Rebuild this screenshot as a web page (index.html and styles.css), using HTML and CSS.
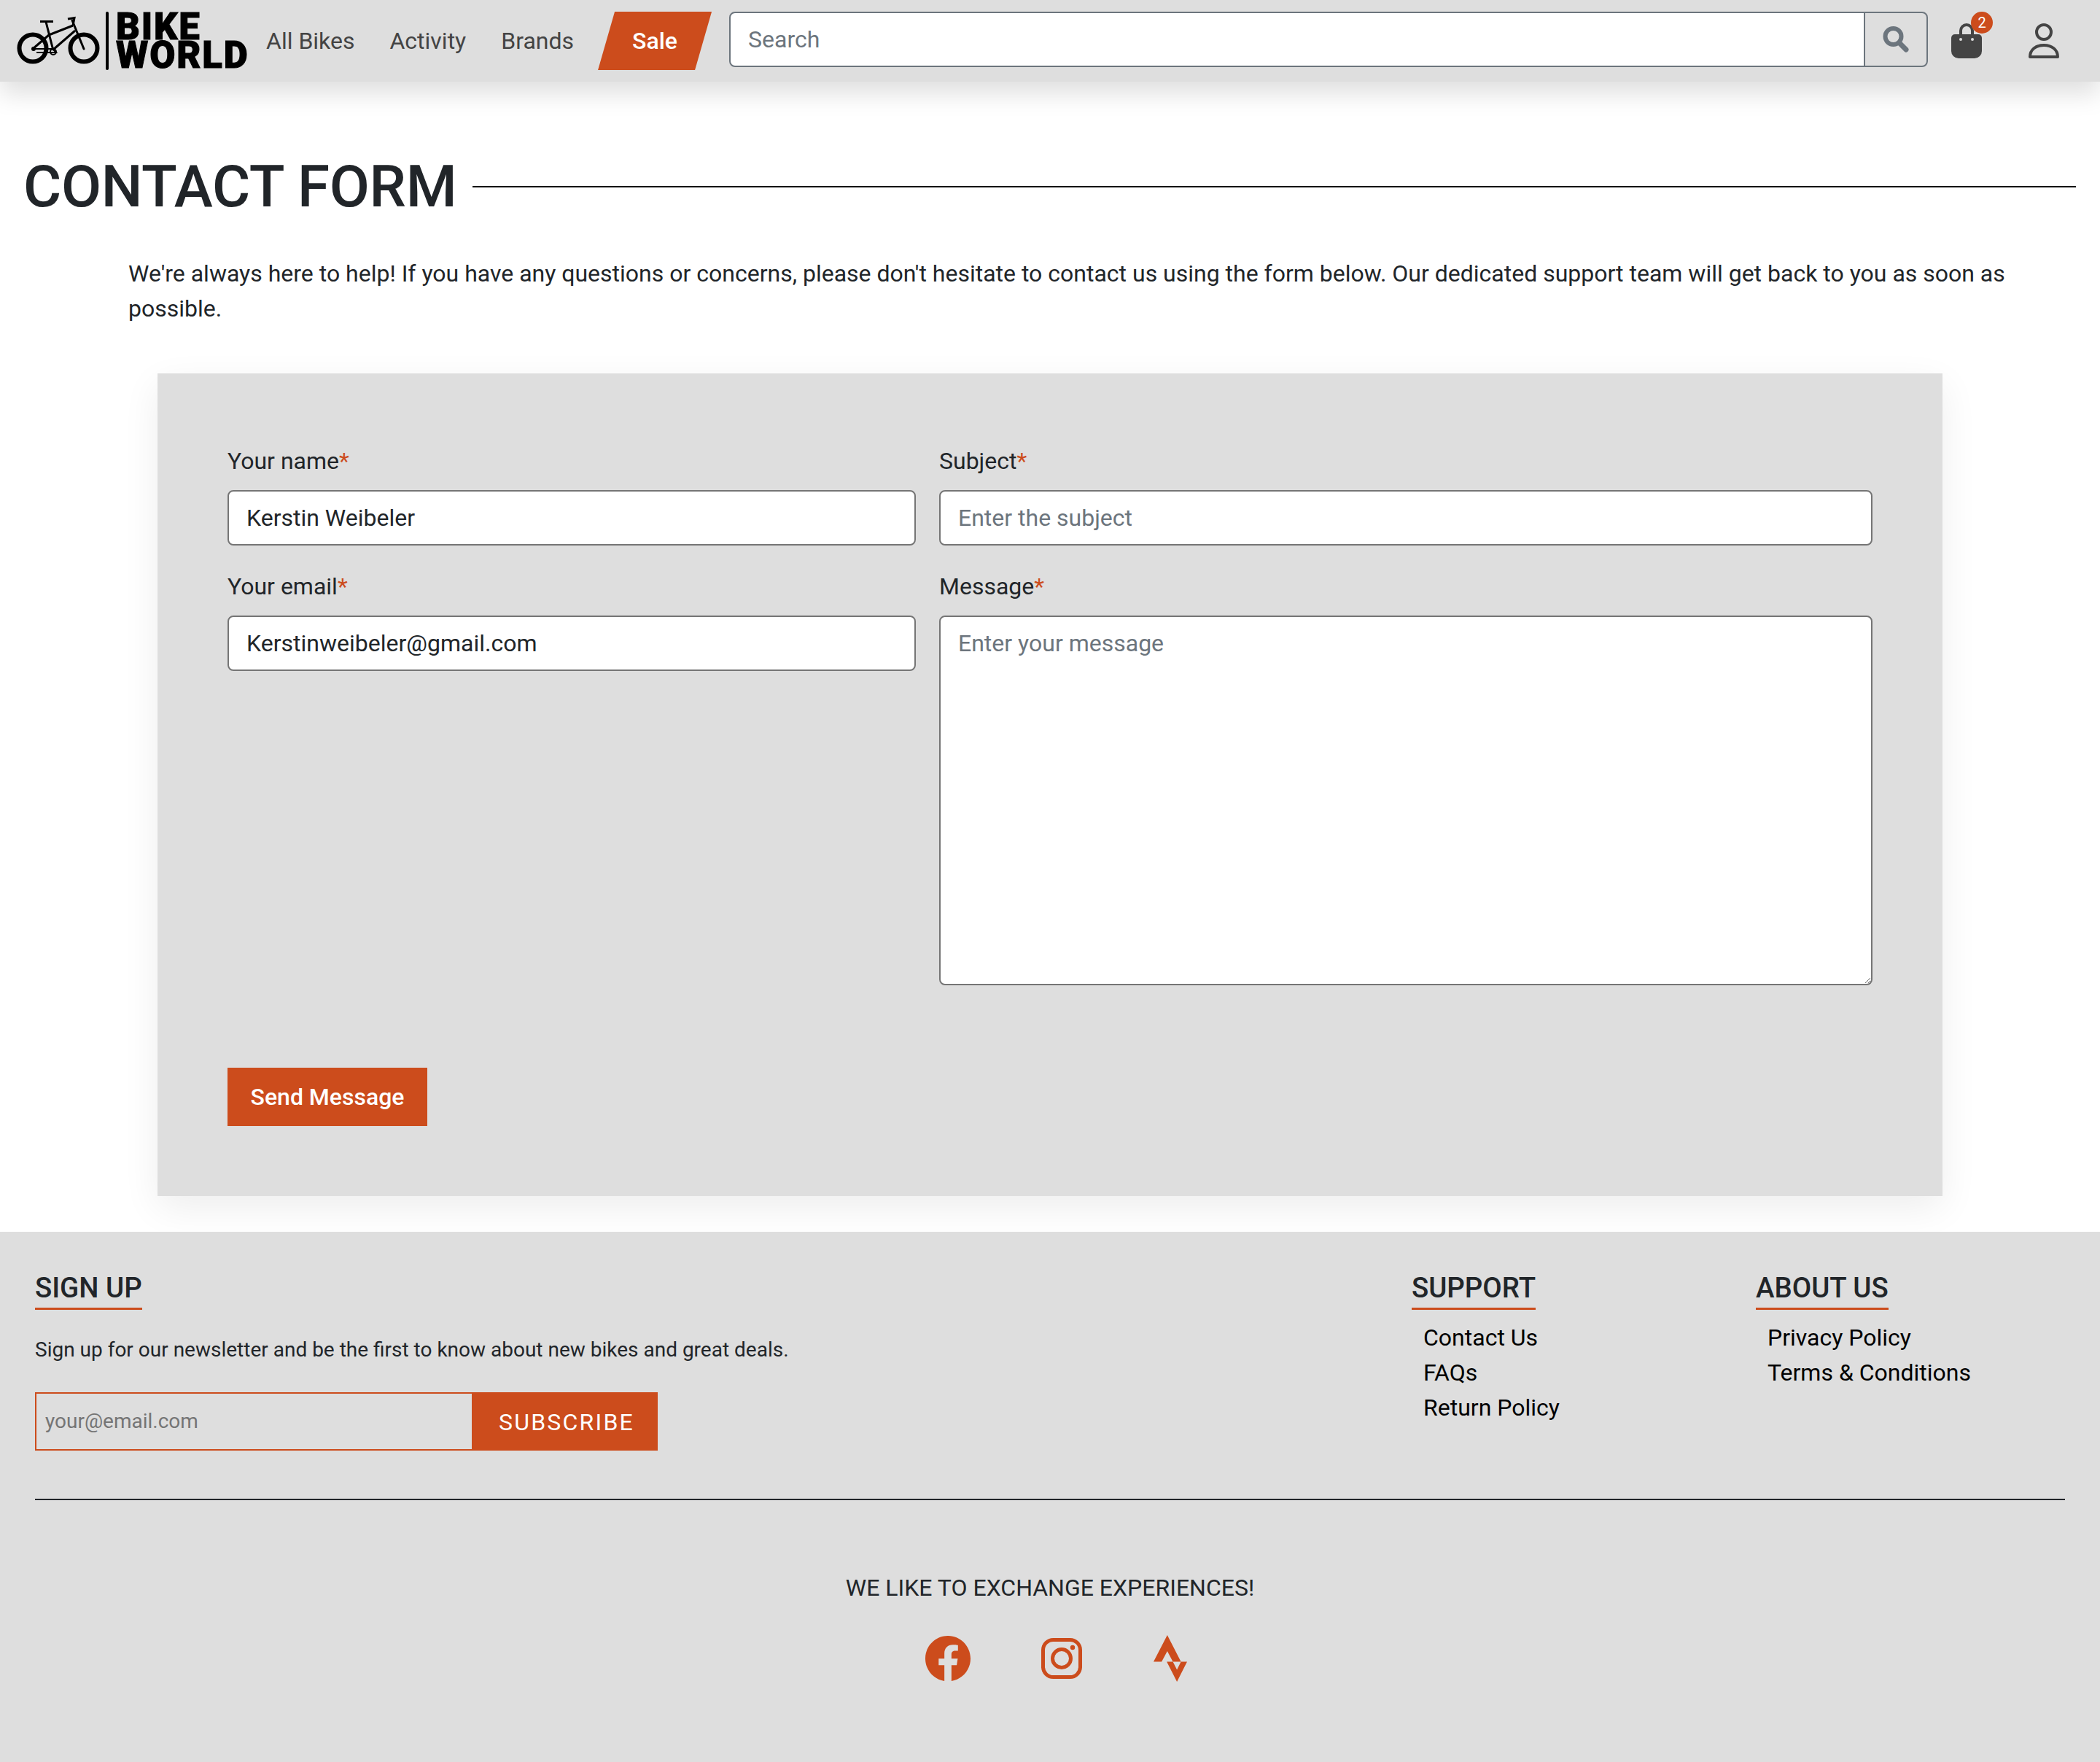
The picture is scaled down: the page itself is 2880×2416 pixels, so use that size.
FILE: index.html
```html
<!DOCTYPE html>
<html lang="en">
<head>
<meta charset="utf-8">
<title>Contact Form - Bike World</title>
<link rel="stylesheet" href="styles.css">
</head>
<body>
<header class="topbar">
  <a class="logo" href="#">
    <svg class="logo-bike" viewBox="22 16 128 80" width="128" height="80" aria-hidden="true">
      <g fill="none" stroke="#000">
        <circle cx="45" cy="66" r="18.5" stroke-width="6"/>
        <circle cx="115" cy="66" r="18.5" stroke-width="6"/>
        <path stroke-width="3" d="M63 30 73 69M67 48 100 35M73 68 103 42M45 67 67 48"/>
        <path stroke-width="2" d="M45 67H72L77 72H50"/>
        <path stroke-width="3" stroke-linecap="round" d="M99 28 115 67"/>
        <path stroke-width="3" d="M55 29.500H73M93 26 102 24.500 100 35"/>
        <circle cx="46" cy="67" r="3" fill="#000" stroke="none"/>
        <circle cx="73" cy="71" r="4" stroke-width="2"/>
        <path stroke-width="4" stroke-linecap="round" d="M147 18V94"/>
      </g>
    </svg>
    <span class="logo-text"><span>BIKE</span><span>WORLD</span></span>
  </a>
  <nav class="mainnav">
    <a href="#">All Bikes</a>
    <a href="#">Activity</a>
    <a href="#">Brands</a>
  </nav>
  <a class="sale" href="#">Sale</a>
  <form class="search">
    <input type="text" placeholder="Search">
    <button type="button" aria-label="Search">
      <svg viewBox="0 0 36 38" width="36" height="38" fill="none" stroke="#6c757d">
        <circle cx="14.500" cy="15" r="11" stroke-width="6"/>
        <path d="M23 24 32 33" stroke-width="7" stroke-linecap="round"/>
      </svg>
    </button>
  </form>
  <a class="cart" href="#" aria-label="Cart">
    <svg viewBox="0 0 42 48" width="42" height="48">
      <path d="M13 17V10a8 8 0 0 1 16 0V17" fill="none" stroke="#444" stroke-width="4"/>
      <path d="M5 15H37a5 5 0 0 1 5 5V38a10 10 0 0 1-10 10H10A10 10 0 0 1 0 38V20a5 5 0 0 1 5-5Z" fill="#444"/>
      <circle cx="13" cy="22" r="2" fill="#ddd"/>
      <circle cx="29" cy="22" r="2" fill="#ddd"/>
    </svg>
    <span class="badge">2</span>
  </a>
  <a class="account" href="#" aria-label="Account">
    <svg viewBox="0 0 42 48" width="42" height="48" fill="none" stroke="#444" stroke-width="4">
      <circle cx="21" cy="12" r="10"/>
      <path d="M2 46C2 36 10 30 21 30S40 36 40 46Z" stroke-linejoin="round"/>
    </svg>
  </a>
</header>

<main class="page">
  <h1 class="page-title">CONTACT FORM</h1>
  <p class="intro">We're always here to help! If you have any questions or concerns, please don't hesitate to contact us using the form below. Our dedicated support team will get back to you as soon as possible.</p>
  <form class="card">
    <div class="fields">
      <div class="col-left">
        <div class="group">
          <label>Your name<span class="req">*</span></label>
          <input class="control" type="text" value="Kerstin Weibeler">
        </div>
        <div class="group">
          <label>Your email<span class="req">*</span></label>
          <input class="control" type="email" value="Kerstinweibeler@gmail.com">
        </div>
      </div>
      <div class="col-right">
        <div class="group">
          <label>Subject<span class="req">*</span></label>
          <input class="control" type="text" placeholder="Enter the subject">
        </div>
        <div class="group">
          <label>Message<span class="req">*</span></label>
          <textarea class="control message" placeholder="Enter your message"></textarea>
        </div>
      </div>
    </div>
    <button class="send" type="button">Send Message</button>
  </form>
</main>

<footer class="footer">
  <div class="footer-top">
    <section class="signup">
      <h2 class="foot-title">SIGN UP</h2>
      <p class="signup-text">Sign up for our newsletter and be the first to know about new bikes and great deals.</p>
      <div class="subscribe">
        <input type="email" placeholder="your@email.com">
        <button type="button">SUBSCRIBE</button>
      </div>
    </section>
    <section class="links links-support">
      <h2 class="foot-title">SUPPORT</h2>
      <ul>
        <li><a href="#">Contact Us</a></li>
        <li><a href="#">FAQs</a></li>
        <li><a href="#">Return Policy</a></li>
      </ul>
    </section>
    <section class="links links-about">
      <h2 class="foot-title">ABOUT US</h2>
      <ul>
        <li><a href="#">Privacy Policy</a></li>
        <li><a href="#">Terms &amp; Conditions</a></li>
      </ul>
    </section>
  </div>
  <div class="social">
    <p>WE LIKE TO EXCHANGE EXPERIENCES!</p>
    <div class="social-icons">
      <a href="#" aria-label="Facebook"><svg viewBox="0 0 16 16" width="62" height="62" fill="#cc4c1c"><path d="M16 8.049c0-4.446-3.582-8.05-8-8.05C3.58 0-.002 3.603-.002 8.05c0 4.017 2.926 7.347 6.75 7.951v-5.625h-2.03V8.05H6.750V6.275c0-2.017 1.195-3.131 3.022-3.131.876 0 1.791.157 1.791.157v1.980h-1.009c-.993 0-1.303.621-1.303 1.258v1.510h2.218l-.354 2.326H9.250V16c3.824-.604 6.750-3.934 6.750-7.951z"/></svg></a>
      <a href="#" aria-label="Instagram"><svg viewBox="0 0 56 56" width="56" height="56" fill="none" stroke="#cc4c1c" stroke-width="5"><rect x="2.500" y="2.500" width="51" height="51" rx="14"/><circle cx="28" cy="28" r="12.500"/><circle cx="43" cy="13" r="3.200" fill="#cc4c1c" stroke="none"/></svg></a>
      <a href="#" aria-label="Strava"><svg viewBox="2 0 11.537 16" width="46" height="64" fill="#cc4c1c"><path d="M6.731 0 2 9.125h2.788L6.730 5.497l1.930 3.628h2.766zm4.694 9.125-1.372 2.756L8.660 9.125H6.547L10.053 16l3.484-6.875z"/></svg></a>
    </div>
  </div>
</footer>
</body>
</html>
```

FILE: styles.css
```css
* { box-sizing: border-box; }
html, body { margin: 0; padding: 0; }
body {
  font-family: Roboto, "Liberation Sans", sans-serif;
  font-size: 32px;
  line-height: 48px;
  color: #212529;
  background: #fff;
}
a { color: inherit; text-decoration: none; }

/* top bar */
.topbar {
  position: relative;
  display: flex;
  align-items: center;
  height: 112px;
  padding: 0 56px 0 22px;
  background: #dedede;
  box-shadow: 0 16px 32px rgba(0, 0, 0, 0.13);
}
.logo { display: flex; align-items: center; color: #000; width: 319px; flex: none; }
.logo-bike { display: block; flex: none; }
.logo-text {
  display: flex;
  flex-direction: column;
  margin-left: 9px;
  font-weight: 900;
  font-size: 51px;
  line-height: 39px;
  letter-spacing: 1.8px;
  -webkit-text-stroke: 1px #000;
}
.mainnav { display: flex; color: #444; flex: none; }
.mainnav a { padding: 0 24px; }
.sale {
  display: flex;
  align-items: center;
  justify-content: center;
  flex: none;
  width: 156px;
  height: 80px;
  margin-left: 9px;
  color: #fff;
  font-weight: 500;
  background: #cc4c1c;
  clip-path: polygon(23px 0, 100% 0, 133px 100%, 0 100%);
}
.search { display: flex; flex: 1; align-self: flex-start; height: 76px; margin: 16px 0 0 24px; }
.search input {
  flex: 1;
  min-width: 0;
  padding: 0 24px;
  font: inherit;
  color: #212529;
  background: #fff;
  border: 2px solid #6c757d;
  border-radius: 8px 0 0 8px;
}
.search button {
  display: flex;
  align-items: center;
  justify-content: center;
  width: 88px;
  padding: 0;
  margin-left: -2px;
  background: transparent;
  border: 2px solid #6c757d;
  border-radius: 0 8px 8px 0;
}
.search input::placeholder, .control::placeholder { color: #6c757d; opacity: 1; }
.cart { position: relative; display: block; height: 48px; margin: 0 0 0 32px; flex: none; }
.cart svg, .account svg { display: block; }
.badge {
  position: absolute;
  top: -16px;
  left: 27px;
  width: 30px;
  height: 30px;
  border-radius: 50%;
  background: #cc4c1c;
  color: #fff;
  font-size: 20px;
  line-height: 30px;
  text-align: center;
}
.account { display: block; height: 48px; margin-left: 64px; flex: none; }

/* main */
.page { padding: 0 33px 0 32px; }
.page-title {
  display: flex;
  align-items: center;
  gap: 22px;
  margin: 0;
  padding-top: 96px;
  font-size: 80px;
  line-height: 96px;
  font-weight: 500;
  letter-spacing: -0.3px;
  white-space: nowrap;
}
.page-title::after {
  content: "";
  flex: 1;
  height: 2px;
  background: #000;
}
.intro {
  margin: 47px 0 0;
  padding: 0 87px 0 144px;
}
.card {
  margin: 65px 183px 0 184px;
  padding: 96px;
  background: #dedede;
  box-shadow: 0 16px 48px rgba(0, 0, 0, 0.07);
}
.fields { display: grid; grid-template-columns: 944px 1280px; gap: 32px; }
.group { margin-bottom: 32px; }
.group label { display: block; margin-bottom: 16px; }
.req { color: #cc4c1c; }
.control {
  display: block;
  width: 100%;
  height: 76px;
  padding: 12px 24px;
  font: inherit;
  color: #212529;
  background: #fff;
  border: 2px solid #757575;
  border-radius: 8px;
}
.message { height: 507px; }
.send {
  display: block;
  width: 274px;
  height: 80px;
  margin-top: 81px;
  padding: 0;
  font: inherit;
  font-weight: 500;
  color: #fff;
  background: #cc4c1c;
  border: 0;
}

/* footer */
.footer {
  height: 728px;
  margin-top: 49px;
  padding: 48px 48px 0;
  background: #dedede;
}
.footer-top {
  display: flex;
  height: 320px;
  border-bottom: 2px solid #212529;
}
.foot-title {
  display: inline-block;
  margin: 0;
  padding: 5px 0 3px;
  font-size: 38.4px;
  line-height: 48px;
  font-weight: 500;
  border-bottom: 3px solid #cc4c1c;
}
.signup { width: 1888px; flex: none; }
.signup-text { margin: 34px 0 0; font-size: 28px; line-height: 42px; }
.subscribe { display: flex; width: 854px; height: 80px; margin-top: 37px; }
.subscribe input {
  width: 599px;
  flex: none;
  padding: 0 12px;
  font: inherit;
  font-size: 28px;
  background: transparent;
  border: 2px solid #cc4c1c;
  border-right: 0;
}
.subscribe input::placeholder { color: #757575; opacity: 1; }
.subscribe button {
  flex: 1;
  padding: 2px 0 0 5px;
  font: inherit;
  font-size: 32px;
  letter-spacing: 2.2px;
  color: #fff;
  background: #cc4c1c;
  border: 0;
}
.links { flex: none; }
.links-support { width: 472px; }
.links ul { margin: 14px 0 0; padding: 0 0 0 16px; list-style: none; color: #000; }

.social { padding-top: 96px; text-align: center; }
.social p { margin: 0; }
.social-icons {
  display: flex;
  justify-content: center;
  align-items: center;
  gap: 0;
  margin-top: 41px;
  height: 64px;
}
.social-icons a { display: block; line-height: 0; }
.social-icons a:nth-child(1) { margin-left: 17px; }
.social-icons a:nth-child(2) { margin-left: 97px; }
.social-icons a:nth-child(3) { margin-left: 98px; }
```
